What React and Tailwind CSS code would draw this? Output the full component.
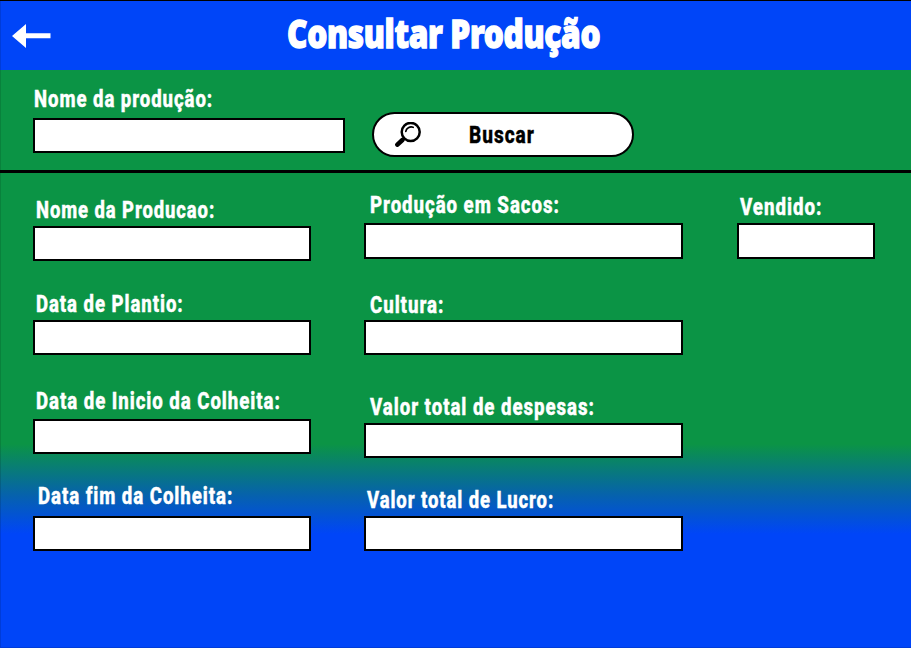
import { useLayoutEffect, useRef, useState } from "react";

// Condenses a line of text horizontally to the given width.
function FitText({ width, className = "", children }) {
  const ref = useRef(null);
  const [scale, setScale] = useState(1);
  useLayoutEffect(() => {
    setScale(width / ref.current.offsetWidth);
  }, [width, children]);
  return (
    <span className="block" style={{ width }}>
      <span
        ref={ref}
        className={`inline-block origin-left whitespace-nowrap align-top ${className}`}
        style={{ transform: `scaleX(${scale})` }}
      >
        {children}
      </span>
    </span>
  );
}

const labelText =
  "font-['Roboto',sans-serif] text-2xl leading-6 font-extrabold tracking-[0.05em] [font-variant-ligatures:none] [-webkit-text-stroke:0.4px_currentColor]";

function Field({ label, width, className = "", labelClass = "", inputClass = "" }) {
  return (
    <label className={`block ${className}`}>
      <span className={`block h-6 ${labelClass}`}>
        <FitText width={width} className={`text-white ${labelText}`}>
          {label}
        </FitText>
      </span>
      <input type="text" className={`block border-2 border-black bg-white ${inputClass}`} />
    </label>
  );
}

function BackArrow() {
  return (
    <svg className="h-6 w-[39px]" viewBox="0 0 39 24" fill="white" aria-hidden="true">
      <path d="M0 12 14 0v9.3h24.5v5H14V24Z" />
    </svg>
  );
}

function Magnifier() {
  return (
    <svg className="h-[25px] w-[26px]" viewBox="0 0 26 25" fill="none" stroke="black" aria-hidden="true">
      <circle cx="15.7" cy="9.9" r="9" strokeWidth="2.5" />
      <path d="M10.8 9.4C11.2 6.2 14.8 4.2 18.2 5.3" strokeWidth="1.7" strokeLinecap="round" />
      <path d="m9.6 16-2.4 2.2" strokeWidth="2.6" />
      <path d="m7.4 18-5 4.6" strokeWidth="4.6" strokeLinecap="round" />
    </svg>
  );
}

export default function App() {
  return (
    <div className="h-[648px] w-[911px] overflow-hidden bg-[linear-gradient(to_bottom,#0045f8_70px,#0b9445_70px,#0b9445_444px,#0662ac_495px,#0045f8_534px)] shadow-[inset_1px_-1px_0_rgba(0,0,0,0.12)]">
      <header className="flex h-[70px] items-start border-t border-black pl-3">
        <button type="button" aria-label="Voltar" className="mt-[23px]">
          <BackArrow />
        </button>
        <h1 className="mt-2 ml-[236px] h-12 text-white">
          <FitText
            width={313}
            className="font-['Noto_Sans',sans-serif] text-[39px] leading-12 font-black tracking-[-0.01em] [-webkit-text-stroke:1.4px_currentColor]"
          >
            Consultar Produção
          </FitText>
        </h1>
      </header>

      <section className="flex h-[103px] items-start border-b-3 border-black pl-[33px]">
        <Field
          label="Nome da produção:"
          width={179}
          className="mt-[17px]"
          labelClass="ml-px"
          inputClass="mt-[7px] h-[35px] w-[312px]"
        />
        <button
          type="button"
          className="mt-[42px] ml-[27px] flex h-[45px] w-[262px] items-center rounded-full border-2 border-black bg-white pl-[21px] text-black"
        >
          <Magnifier />
          <span className="mt-px ml-[48px] h-6">
            <FitText width={66} className={labelText}>
              Buscar
            </FitText>
          </span>
        </button>
      </section>

      <main className="flex items-start pl-[33px]">
        <div className="w-[331px] pt-[25px]">
          <Field label="Nome da Producao:" width={179} labelClass="ml-[3px]" inputClass="mt-1 h-[35px] w-[278px]" />
          <Field label="Data de Plantio:" width={148} className="mt-[31px]" labelClass="ml-[3px]" inputClass="mt-1 h-[35px] w-[278px]" />
          <Field label="Data de Inicio da Colheita:" width={245} className="mt-[34px]" labelClass="ml-[3px]" inputClass="mt-1.5 h-[35px] w-[278px]" />
          <Field label="Data fim da Colheita:" width={195} className="mt-[30px]" labelClass="ml-[5px]" inputClass="mt-2 h-[35px] w-[278px]" />
        </div>
        <div className="w-[373px] pt-5">
          <Field label="Produção em Sacos:" width={190} labelClass="ml-1.5" inputClass="mt-1.5 h-9 w-[319px]" />
          <Field label="Cultura:" width={74} className="mt-[34px]" labelClass="ml-1.5" inputClass="mt-[3px] h-[35px] w-[319px]" />
          <Field label="Valor total de despesas:" width={225} className="mt-10" labelClass="ml-1.5" inputClass="mt-1 h-[35px] w-[319px]" />
          <Field label="Valor total de Lucro:" width={187} className="mt-[30px]" labelClass="ml-[3px]" inputClass="mt-1 h-[35px] w-[319px]" />
        </div>
        <div className="pt-[22px]">
          <Field label="Vendido:" width={82} labelClass="ml-[3px]" inputClass="mt-1 h-9 w-[138px]" />
        </div>
      </main>
    </div>
  );
}
